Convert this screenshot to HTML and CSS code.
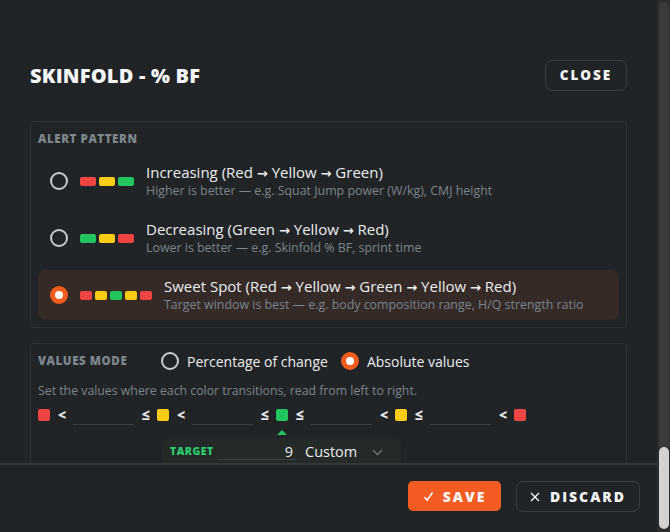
FILE: index.html
```html
<!DOCTYPE html>
<html>
<head>
<meta charset="utf-8">
<title>Skinfold - % BF</title>
<link rel="stylesheet" href="styles.css">
</head>
<body>
<div class="page">
  <div class="modal">
    <header class="modal-head">
      <h1 class="title">SKINFOLD - % BF</h1>
      <button class="btn btn-outline btn-close">CLOSE</button>
    </header>

    <div class="modal-body">
      <section class="panel panel-alert">
        <div class="panel-label">ALERT PATTERN</div>
        <div class="options">
          <div class="option">
            <span class="radio"></span>
            <span class="bars"><i class="bar red"></i><i class="bar yellow"></i><i class="bar green"></i></span>
            <div class="opt-text">
              <div class="opt-title">Increasing (Red <span class="arr">→</span> Yellow <span class="arr">→</span> Green)</div>
              <div class="opt-sub">Higher is better — e.g. Squat Jump power (W/kg), CMJ height</div>
            </div>
          </div>
          <div class="option">
            <span class="radio"></span>
            <span class="bars"><i class="bar green"></i><i class="bar yellow"></i><i class="bar red"></i></span>
            <div class="opt-text">
              <div class="opt-title">Decreasing (Green <span class="arr">→</span> Yellow <span class="arr">→</span> Red)</div>
              <div class="opt-sub">Lower is better — e.g. Skinfold % BF, sprint time</div>
            </div>
          </div>
          <div class="option selected">
            <span class="radio checked"></span>
            <span class="bars bars-small"><i class="bar red"></i><i class="bar yellow"></i><i class="bar green"></i><i class="bar yellow"></i><i class="bar red"></i></span>
            <div class="opt-text">
              <div class="opt-title">Sweet Spot (Red <span class="arr">→</span> Yellow <span class="arr">→</span> Green <span class="arr">→</span> Yellow <span class="arr">→</span> Red)</div>
              <div class="opt-sub">Target window is best — e.g. body composition range, H/Q strength ratio</div>
            </div>
          </div>
        </div>
      </section>

      <section class="panel panel-values">
        <div class="values-head">
          <div class="panel-label">VALUES MODE</div>
          <label class="choice"><span class="radio"></span><span>Percentage of change</span></label>
          <label class="choice"><span class="radio checked"></span><span>Absolute values</span></label>
        </div>
        <p class="hint">Set the values where each color transitions, read from left to right.</p>
        <div class="thresholds">
          <i class="sq red"></i><span class="sym">&lt;</span><span class="field"></span><span class="sym">≤</span>
          <i class="sq yellow"></i><span class="sym">&lt;</span><span class="field"></span><span class="sym">≤</span>
          <i class="sq green"></i><span class="sym">≤</span><span class="field"></span><span class="sym">&lt;</span>
          <i class="sq yellow"></i><span class="sym">≤</span><span class="field"></span><span class="sym">&lt;</span>
          <i class="sq red"></i>
        </div>
        <div class="target-wrap">
          <span class="caret"></span>
          <div class="target">
            <span class="target-label">TARGET</span>
            <span class="target-field">9</span>
            <span class="target-select">Custom
              <svg class="chev" width="11" height="7" viewBox="0 0 11 7"><path d="M1 1l4.5 4.5L10 1" fill="none" stroke="#6f777d" stroke-width="1.3"/></svg>
            </span>
          </div>
        </div>
      </section>
    </div>

    <footer class="modal-foot">
      <button class="btn btn-save">
        <svg width="11" height="11" viewBox="0 0 11 11"><path d="M1.5 6l2.6 3.2L9.5 1.5" fill="none" stroke="#fff" stroke-width="1.5"/></svg>
        SAVE
      </button>
      <button class="btn btn-outline btn-discard">
        <svg width="10" height="10" viewBox="0 0 10 10"><path d="M1 1l8 8M9 1l-8 8" fill="none" stroke="#fff" stroke-width="1.3"/></svg>
        DISCARD
      </button>
    </footer>
  </div>
  <div class="scrollbar"><div class="track-part"></div><div class="thumb"></div></div>
</div>
</body>
</html>
```

FILE: styles.css
```css
* { box-sizing: border-box; }
html, body { margin: 0; padding: 0; }
body {
  background: #212427;
  font-family: "Open Sans", "Noto Sans", sans-serif;
  color: #e9ebec;
}
.page {
  display: flex;
  width: 670px;
  height: 532px;
}
.modal {
  width: 657px;
  height: 532px;
  display: flex;
  flex-direction: column;
  background: #212427;
}
.modal-head {
  display: flex;
  align-items: center;
  justify-content: space-between;
  padding: 60px 30px 0 30px;
  height: 90px;
}
.title {
  margin: 0;
  font-size: 20px;
  font-weight: 800;
  letter-spacing: 0.2px;
  color: #f4f5f6;
}
.btn {
  font-family: inherit;
  cursor: pointer;
  display: inline-flex;
  align-items: center;
  justify-content: center;
  font-weight: 800;
  letter-spacing: 2px;
  color: #f4f5f6;
}
.btn-outline {
  background: transparent;
  border: 1px solid #3a3e42;
  border-radius: 7px;
}
.btn-close {
  width: 82px;
  height: 31px;
  font-size: 13.5px;
}
.modal-body {
  flex: 1;
  overflow: hidden;
  padding: 31px 30px 0 30px;
}
.panel {
  border: 1px solid #2e3236;
  border-radius: 4px;
}
.panel-alert {
  padding: 10px 7px 7px 7px;
}
.panel-label {
  font-size: 11.5px;
  font-weight: 800;
  letter-spacing: 0.6px;
  color: #7d878d;
  line-height: 14px;
}
.options {
  display: flex;
  flex-direction: column;
  gap: 7px;
  margin-top: 10px;
}
.option {
  height: 50px;
  display: flex;
  align-items: center;
  padding-left: 12px;
  border-radius: 8px;
}
.option.selected { background: #362a27; }
.radio {
  width: 18px;
  height: 18px;
  border-radius: 50%;
  border: 2px solid #c9ccce;
  flex: none;
}
.radio.checked {
  border: 5px solid #f25c1f;
  background: #fff;
}
.bars {
  display: flex;
  gap: 3px;
  margin-left: 12px;
  margin-right: 12px;
}
.bar {
  display: block;
  width: 16px;
  height: 9px;
  border-radius: 2px;
}
.bars-small .bar { width: 12px; }
.red { background: #ef4444; }
.yellow { background: #facc15; }
.green { background: #22c55e; }
.opt-title {
  font-size: 15px;
  line-height: 18px;
  color: #eceeef;
}
.arr {
  font-family: "DejaVu Sans", sans-serif;
  font-size: 13px;
  font-weight: 700;
}
.opt-sub {
  font-size: 12.4px;
  line-height: 16px;
  color: #7b858b;
}
.panel-values {
  margin-top: 15px;
  padding: 9px 7px 0 7px;
  height: 200px;
}
.values-head {
  display: flex;
  align-items: center;
  height: 16px;
}
.values-head .panel-label { width: 123px; }
.choice {
  display: flex;
  align-items: center;
  gap: 8px;
  font-size: 14px;
  color: #eceeef;
  margin-right: 13px;
}
.hint {
  margin: 14px 0 0 0;
  font-size: 12.3px;
  line-height: 16px;
  color: #7b858b;
}
.thresholds {
  display: flex;
  align-items: center;
  gap: 8px;
  margin-top: 6px;
  height: 20px;
}
.sq {
  display: block;
  width: 12px;
  height: 12px;
  border-radius: 2px;
}
.sym {
  width: 7px;
  font-size: 14px;
  font-weight: 800;
  color: #e6e8ea;
  text-align: center;
  line-height: 14px;
}
.field {
  width: 61px;
  height: 20px;
  border-bottom: 1px solid #3b3f43;
}
.target-wrap {
  width: 239px;
  margin-left: 124px;
  margin-top: 5px;
  display: flex;
  flex-direction: column;
  align-items: center;
}
.caret {
  width: 0;
  height: 0;
  border-left: 5px solid transparent;
  border-right: 5px solid transparent;
  border-bottom: 5px solid #22c55e;
}
.target {
  width: 100%;
  margin-top: 4px;
  height: 34px;
  background: #232a27;
  border-radius: 6px;
  display: flex;
  align-items: flex-start;
  padding: 4px 8px 0 8px;
}
.target-label {
  font-size: 10.5px;
  font-weight: 800;
  letter-spacing: 0.5px;
  color: #2ecc71;
  width: 48px;
  line-height: 16px;
}
.target-field {
  width: 78px;
  text-align: right;
  padding-right: 3px;
  font-size: 14.5px;
  line-height: 18px;
  height: 17px;
  border-bottom: 1px solid #3b3f43;
  color: #eceeef;
}
.target-select {
  margin-left: 9px;
  font-size: 14.5px;
  line-height: 18px;
  color: #eceeef;
  display: flex;
  align-items: center;
  gap: 15px;
}
.modal-foot {
  height: 69px;
  border-top: 2px solid #34383c;
  display: flex;
  justify-content: flex-end;
  align-items: flex-start;
  padding: 16px 17px 0 0;
  gap: 15px;
}
.btn-save {
  width: 93px;
  height: 30px;
  border: none;
  border-radius: 5px;
  background: #f25c22;
  font-size: 14px;
  gap: 9px;
}
.btn-discard {
  width: 124px;
  height: 31px;
  font-size: 14px;
  gap: 10px;
}
.scrollbar {
  width: 13px;
  height: 532px;
  background: #2b2c2d;
  display: flex;
  flex-direction: column;
  align-items: center;
  padding: 2px 0 3px 0;
}
.track-part {
  width: 10px;
  flex: 1;
  background: #393a3b;
  border-radius: 5px 5px 0 0;
}
.thumb {
  width: 10px;
  height: 82px;
  background: #d2d2d2;
  border-radius: 5px;
}
```
